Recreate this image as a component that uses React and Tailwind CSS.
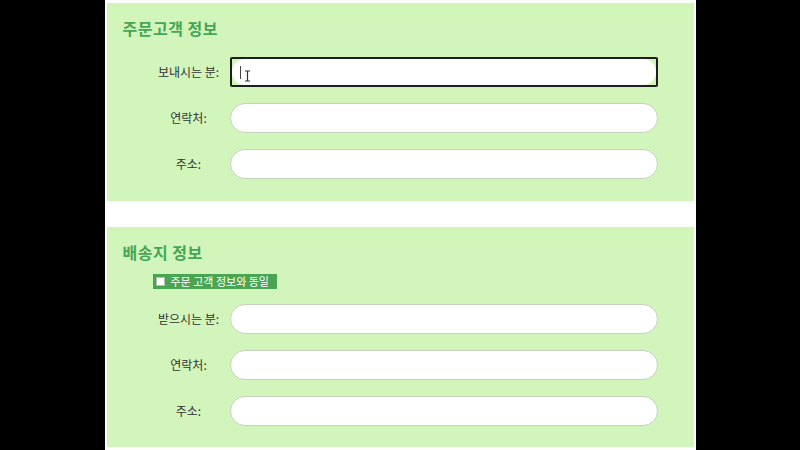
const font = { fontFamily: '"Noto Sans CJK KR", "Noto Sans", sans-serif' }

function Row({ label, focused }) {
  return (
    <div className="flex items-center h-[30px]">
      <label className="ml-[49px] w-[66px] text-center whitespace-nowrap text-[12px] text-[#333]">{label}</label>
      <div className="ml-[8px] w-[428px] h-[30px]">
        {focused ? (
          <div className="relative w-full h-full border-2 border-[#1f1f1f] rounded-[2px] bg-[#d2f5bb]">
            <div className="w-full h-full rounded-full bg-white flex items-center pl-[8px]">
              <span className="block w-[1px] h-[13px] bg-[#444]" />
              <svg width="7" height="12" viewBox="0 0 7 12" className="ml-[3px] mt-[7px]">
                <path d="M1 1h5M3.5 1v10M1 11h5" stroke="#333" strokeWidth="1.2" fill="none" />
              </svg>
            </div>
          </div>
        ) : (
          <input className="w-full h-full rounded-full bg-white border border-[#c8d0c0] outline-none px-3" />
        )}
      </div>
    </div>
  )
}

function Panel({ title, children, className }) {
  return (
    <div className={'bg-[#d2f5bb] pt-[14px] ' + className}>
      <h2 className="ml-[16px] h-[22px] leading-[22px] text-[16px] font-bold tracking-[0.5px] text-[#45a655]">{title}</h2>
      {children}
    </div>
  )
}

export default function App() {
  return (
    <div className="w-[800px] h-[450px] bg-black flex justify-center overflow-hidden" style={font}>
      <div className="w-[591px] bg-white px-[2px] pt-[3px]">
        <Panel title="주문고객 정보" className="h-[198px]">
          <div className="mt-[18px] flex flex-col gap-[16px]">
            <Row label="보내시는 분:" focused />
            <Row label="연락처:" />
            <Row label="주소:" />
          </div>
        </Panel>
        <div className="h-[26px]" />
        <Panel title="배송지 정보" className="h-[220px]">
          <div className="ml-[46px] mt-[11px] w-[124px] h-[15px] bg-[#4aa552] flex items-center pl-[3px] gap-[6px]">
            <span className="block w-[9px] h-[9px] bg-white border border-[#bbb]" />
            <span className="text-[11px] text-white leading-none">주문 고객 정보와 동일</span>
          </div>
          <div className="mt-[15px] flex flex-col gap-[16px]">
            <Row label="받으시는 분:" />
            <Row label="연락처:" />
            <Row label="주소:" />
          </div>
        </Panel>
      </div>
    </div>
  )
}
